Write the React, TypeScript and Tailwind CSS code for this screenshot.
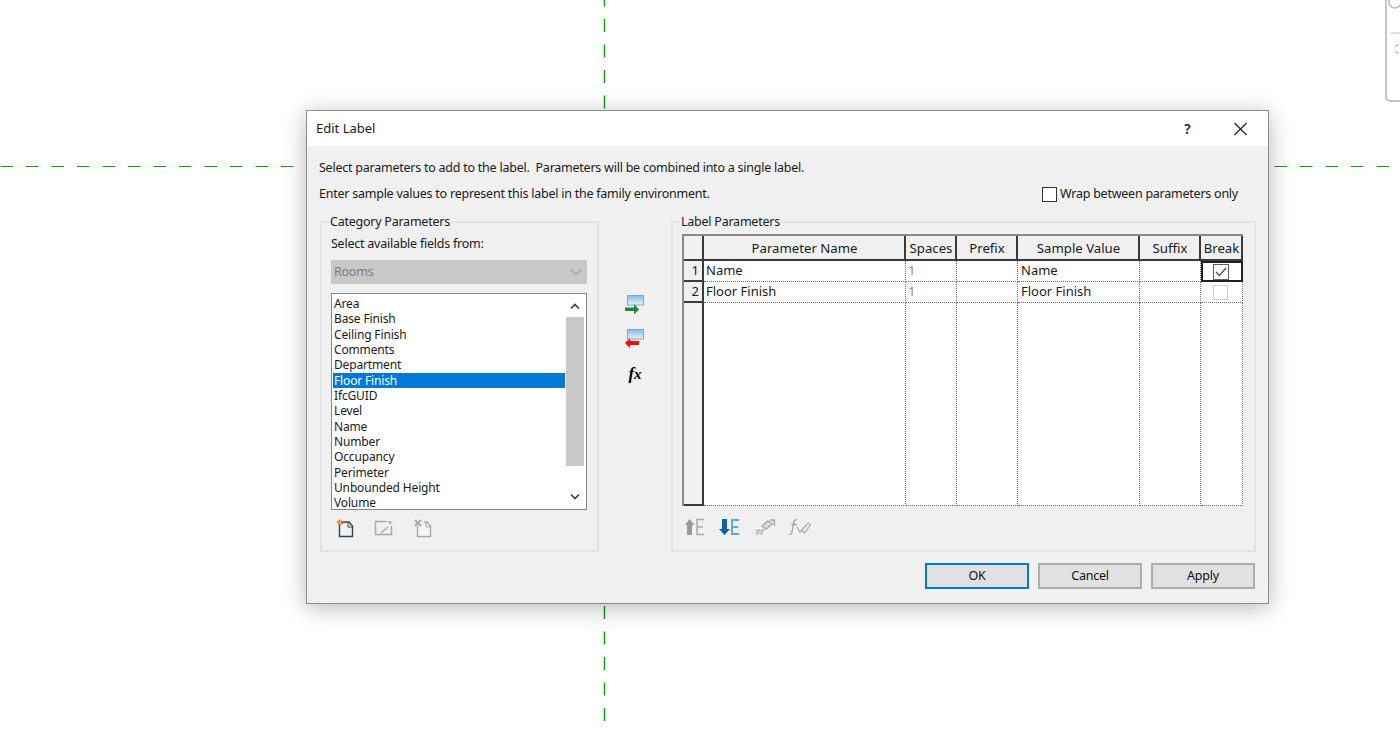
const font = { fontFamily: '"Noto Sans", "Open Sans", sans-serif' };

const FIELDS = ["Area","Base Finish","Ceiling Finish","Comments","Department","Floor Finish","IfcGUID","Level","Name","Number","Occupancy","Perimeter","Unbounded Height","Volume"];

function Guides() {
  return (
    <svg className="absolute inset-0" width="1400" height="731">
      <line x1="0.500" y1="166.500" x2="294" y2="166.500" stroke="#109a10" strokeWidth="1.200" strokeDasharray="12.500 13" />
      <line x1="1274.500" y1="166.500" x2="1400" y2="166.500" stroke="#109a10" strokeWidth="1.200" strokeDasharray="12.500 13" />
      <line x1="604.500" y1="-6.500" x2="604.500" y2="110" stroke="#16a016" strokeWidth="1.500" strokeDasharray="13 12.500" />
      <line x1="604.500" y1="606" x2="604.500" y2="721" stroke="#16a016" strokeWidth="1.500" strokeDasharray="13 12.500" />
    </svg>
  );
}

function Corner() {
  return (
    <div className="absolute right-0 top-0 w-[15px] h-[102px] border-l-2 border-b-2 border-[#c4c4c4] rounded-bl-[5px] bg-white overflow-hidden">
      <svg width="15" height="100">
        <circle cx="8" cy="2" r="6" fill="none" stroke="#b8b8b8" strokeWidth="1.500" />
        <line x1="4" y1="33" x2="15" y2="33" stroke="#c4c4c4" />
        <path d="M9 45h3M9 45v2M9 53h3M9 53v-2" stroke="#b0b0b0" fill="none" />
      </svg>
    </div>
  );
}

function ArrowAdd() {
  return (
    <svg width="22" height="22" viewBox="0 0 22 22">
      <defs>
        <linearGradient id="bar" x1="0" x2="0" y1="0" y2="1"><stop offset="0" stopColor="#86b6e6" /><stop offset="1" stopColor="#eaf3fc" /></linearGradient>
      </defs>
      <rect x="3.500" y="1.500" width="16" height="9.500" fill="url(#bar)" stroke="#78a8dc" />
      <path d="M1 13.500h9V10l5 5.500-5 5V17H1z" fill="#23863c" />
    </svg>
  );
}

function ArrowRemove() {
  return (
    <svg width="22" height="22" viewBox="0 0 22 22">
      <rect x="3.500" y="1.500" width="16" height="9.500" fill="url(#bar)" stroke="#78a8dc" />
      <path d="M15 13H6v-3l-5 5 5 5v-3h9z" fill="#f60a0a" />
    </svg>
  );
}

function NewParam() {
  return (
    <svg width="20" height="20" viewBox="0 0 20 20">
      <path d="M4.500 6v12.500h13V8l-3.500-4H8" fill="#eef2f6" stroke="#3a4048" strokeWidth="1.400" />
      <path d="M13 4v5h5" fill="none" stroke="#3a4048" />
      <circle cx="5" cy="4.500" r="2" fill="#ffd060" stroke="#ea4a10" strokeWidth="2" strokeDasharray="1.500 1" />
    </svg>
  );
}

function EditParam() {
  return (
    <svg width="20" height="20" viewBox="0 0 20 20">
      <path d="M17.500 8v8.500h-16v-13h11" fill="none" stroke="#a8a8a8" strokeWidth="1.500" />
      <path d="M7 15l7-6M14 4.500c1.500-1.500 3-1 3 0 0 1-1 1-1.500 2" fill="none" stroke="#a8a8a8" strokeWidth="1.300" />
    </svg>
  );
}

function DeleteParam() {
  return (
    <svg width="20" height="20" viewBox="0 0 20 20">
      <path d="M4.500 8v10.500h13V8l-3.500-4H11" fill="#f4f4f4" stroke="#a8a8a8" strokeWidth="1.400" />
      <path d="M13 4v5h5" fill="none" stroke="#a8a8a8" />
      <path d="M2 2l6 6M8 2l-6 6" stroke="#a8a8a8" strokeWidth="2" />
    </svg>
  );
}

function MoveUp() {
  return (
    <svg width="22" height="20" viewBox="0 0 22 20">
      <path d="M5.500 2l5 6H8v10H3V8H1z" fill="#999" />
      <path d="M20 2.500h-7v15h7M13 10h6" fill="none" stroke="#aaa" strokeWidth="1.500" />
    </svg>
  );
}

function MoveDown() {
  return (
    <svg width="22" height="20" viewBox="0 0 22 20">
      <path d="M3 2h5v10h3l-5.500 6L0 12h3z" fill="#0f5fa8" />
      <path d="M20 3h-7v14h7M13 10h6" fill="none" stroke="#5aa8e8" strokeWidth="2" />
    </svg>
  );
}

function SizeIcon() {
  return (
    <svg width="22" height="20" viewBox="0 0 22 20">
      <path d="M3 18l2-6M7 18l2-6M1.500 13.500h9M1 16h8" stroke="#b0b0b0" strokeWidth="1" fill="none" />
      <path d="M8 9l6-5 4 3-6 5zM16 3h4.500v6" stroke="#aaa" strokeWidth="1.400" fill="#ddd" />
    </svg>
  );
}

function FxEdit() {
  return (
    <svg width="22" height="20" viewBox="0 0 22 20">
      <path d="M8 3c-2-.7-3 .5-3.300 2.500L3 15c-.3 2-1.300 2.800-2.800 2.300M2.500 7.500h5" fill="none" stroke="#a0a0a0" strokeWidth="1.300" />
      <path d="M8 10l3 5 3-3M13 13l6-7 2.500 2-6 8z" stroke="#aaa" strokeWidth="1.200" fill="none" />
    </svg>
  );
}

function UpChevron({ down }: { down?: boolean }) {
  return (
    <svg width="10" height="7" viewBox="0 0 10 7">
      <path d={down ? "M1 1.500l4 4 4-4" : "M1 5.500l4-4 4 4"} fill="none" stroke="#404040" strokeWidth="1.700" />
    </svg>
  );
}

function ListBox() {
  return (
    <div className="mt-[9px] ml-[9px] mr-[10px] h-[217px] border border-[#828790] bg-white flex py-px pr-[2px]">
      <div className="flex-1 min-w-0 h-full overflow-hidden pt-px mx-px">
        {FIELDS.map((f) => (
          <div
            key={f}
            className={`h-[15.33px] leading-[15.33px] pl-px text-[12px] tracking-[-0.15px] whitespace-nowrap ${f === "Floor Finish" ? "bg-[#0078d7] text-white" : "text-[#1a1a1a]"}`}
          >
            {f}
          </div>
        ))}
      </div>
      <div className="w-[18px] h-full flex flex-col">
        <div className="h-[22px] flex items-center justify-center"><UpChevron /></div>
        <div className="h-[149px] bg-[#c8c8c8]" />
        <div className="flex-1 flex items-end justify-center pb-[8px]"><UpChevron down /></div>
      </div>
    </div>
  );
}

const COLS = "grid-cols-[20px_202px_51px_61px_122px_61px_42px]";

function HeaderCell({ children }: { children?: React.ReactNode }) {
  return (
    <div className="border-r-2 border-b-2 border-[#3a3a3a] bg-[#f0f0f0] flex items-center justify-center pt-[2px] pl-px text-[13.2px] tracking-normal text-[#1a1a1a] whitespace-nowrap">
      {children}
    </div>
  );
}

function RowHead({ n }: { n?: number }) {
  return (
    <div className="border-r-2 border-b-2 border-[#3a3a3a] bg-[#f0f0f0] flex items-center justify-end pr-[3px] text-[13px] tracking-normal text-[#1a1a1a]">
      {n}
    </div>
  );
}

function Cell({ children, cls = "text-[#1a1a1a] pl-[2px]" }: { children?: React.ReactNode; cls?: string }) {
  return (
    <div className={`border-r border-b border-dotted border-[#707070] bg-white flex items-center text-[13px] tracking-normal whitespace-nowrap ${cls}`}>
      {children}
    </div>
  );
}

function ParamTable() {
  const headers = ["Parameter Name", "Spaces", "Prefix", "Sample Value", "Suffix", "Break"];
  return (
    <div className={`grid ${COLS} grid-rows-[25px_21px_21px_203px] w-[561px] border-l-2 border-t-2 border-[#8a8a8a]`}>
      <HeaderCell />
      {headers.map((h) => <HeaderCell key={h}>{h}</HeaderCell>)}

      <RowHead n={1} />
      <Cell>Name</Cell>
      <Cell cls="text-[#8a8a8a] pl-[2px]">1</Cell>
      <Cell />
      <Cell cls="text-[#1a1a1a] pl-[3px]">Name</Cell>
      <Cell />
      <div className="border-2 border-[#202020] bg-white flex items-center justify-center pr-[2px]">
        <svg width="16" height="16" viewBox="0 0 16 16">
          <rect x="0.500" y="0.500" width="15" height="15" fill="#fff" stroke="#606060" />
          <path d="M3 8l3.500 3.500L13 4" fill="none" stroke="#505050" strokeWidth="1.400" />
        </svg>
      </div>

      <RowHead n={2} />
      <Cell>Floor Finish</Cell>
      <Cell cls="text-[#8a8a8a] pl-[2px]">1</Cell>
      <Cell />
      <Cell cls="text-[#1a1a1a] pl-[3px]">Floor Finish</Cell>
      <Cell />
      <Cell cls="justify-center pr-[2px]">
        <div className="w-[15px] h-[15px] border border-[#d0d0d0]" />
      </Cell>

      <RowHead />
      <Cell /><Cell /><Cell /><Cell /><Cell /><Cell />
    </div>
  );
}

function DlgButton({ children, primary }: { children: React.ReactNode; primary?: boolean }) {
  return (
    <button className={`h-[26px] w-[104px] bg-[#e1e1e1] text-[12.5px] text-[#111] ${primary ? "border-2 border-[#0078d7]" : "border-2 border-[#adadad]"}`}>
      {children}
    </button>
  );
}

export default function App() {
  return (
    <div className="relative w-[1400px] h-[731px] bg-white overflow-hidden" style={font}>
      <Guides />
      <Corner />
      <div className="absolute left-[306px] top-[110px] w-[963px] h-[493.500px] border border-[#8c8c8c] bg-[#f0f0f0] shadow-[0_4px_22px_rgba(0,0,0,0.28)] flex flex-col">
        <div className="h-[35px] bg-white flex items-center pl-[9px] text-[13px] text-[#1a1a1a]">
          <span className="flex-1">Edit Label</span>
          <span className="w-[53px] font-semibold text-[14px] text-[#222] text-center">?</span>
          <svg width="54" height="14" viewBox="0 0 54 14">
            <path d="M20.500 1l12 12M32.500 1l-12 12" stroke="#222" strokeWidth="1.300" fill="none" />
          </svg>
        </div>

        <div className="flex-1 flex flex-col px-[12px] text-[12.5px] tracking-[-0.24px] text-[#1a1a1a]">
          <div className="h-[46px] flex flex-col">
            <p className="mt-[13px] leading-[17px] whitespace-pre">Select parameters to add to the label.  Parameters will be combined into a single label.</p>
            <div className="mt-[9px] flex items-start">
              <p className="flex-1 leading-[17px]">Enter sample values to represent this label in the family environment.</p>
              <label className="mr-[18px] flex items-center gap-[3px]">
                <span className="w-[15px] h-[15px] border border-[#333] bg-white" />
                <span>Wrap between parameters only</span>
              </label>
            </div>
          </div>

          <div className="mt-[22px] flex items-start">
            <fieldset className="ml-px w-[279px] h-[338px] border-2 border-[#e3e3e3]">
              <legend className="ml-[7px] px-px leading-[15px]">Category Parameters</legend>
              <div className="mx-[9px] mt-[6px] leading-[17px]">Select available fields from:</div>
              <div className="ml-[9px] mr-[10px] mt-[8px] h-[24px] bg-[#c8c8c8] flex items-center justify-between pl-[3px] pr-[5px] text-[#7d7d7d]">
                <span>Rooms</span>
                <svg width="12" height="8" viewBox="0 0 12 8"><path d="M1 1.500l5 5 5-5" stroke="#a4a4a4" strokeWidth="1.200" fill="none" /></svg>
              </div>
              <ListBox />
              <div className="mt-[8px] ml-[13px] flex gap-[19px]">
                <NewParam />
                <EditParam />
                <DeleteParam />
              </div>
            </fieldset>

            <div className="w-[72px] flex flex-col items-center pt-[80px] gap-[12px]">
              <ArrowAdd />
              <ArrowRemove />
              <span className="mt-px h-[22px] leading-[22px] italic text-black tracking-normal font-bold" style={{ fontFamily: '"Liberation Serif", serif' }}>
                <span className="text-[17px]">f</span><span className="text-[15px]">x</span>
              </span>
            </div>

            <fieldset className="w-[585px] h-[338px] border-2 border-[#e3e3e3]">
              <legend className="ml-[7px] px-px leading-[15px]">Label Parameters</legend>
              <div className="ml-[9px] mt-[5px]"><ParamTable /></div>
              <div className="mt-[11px] ml-[11px] flex gap-[13px]">
                <MoveUp />
                <MoveDown />
                <SizeIcon />
                <FxEdit />
              </div>
            </fieldset>
          </div>

          <div className="mt-[11px] flex justify-end gap-[9px] pr-px">
            <DlgButton primary>OK</DlgButton>
            <DlgButton>Cancel</DlgButton>
            <DlgButton>Apply</DlgButton>
          </div>
        </div>
      </div>
    </div>
  );
}
